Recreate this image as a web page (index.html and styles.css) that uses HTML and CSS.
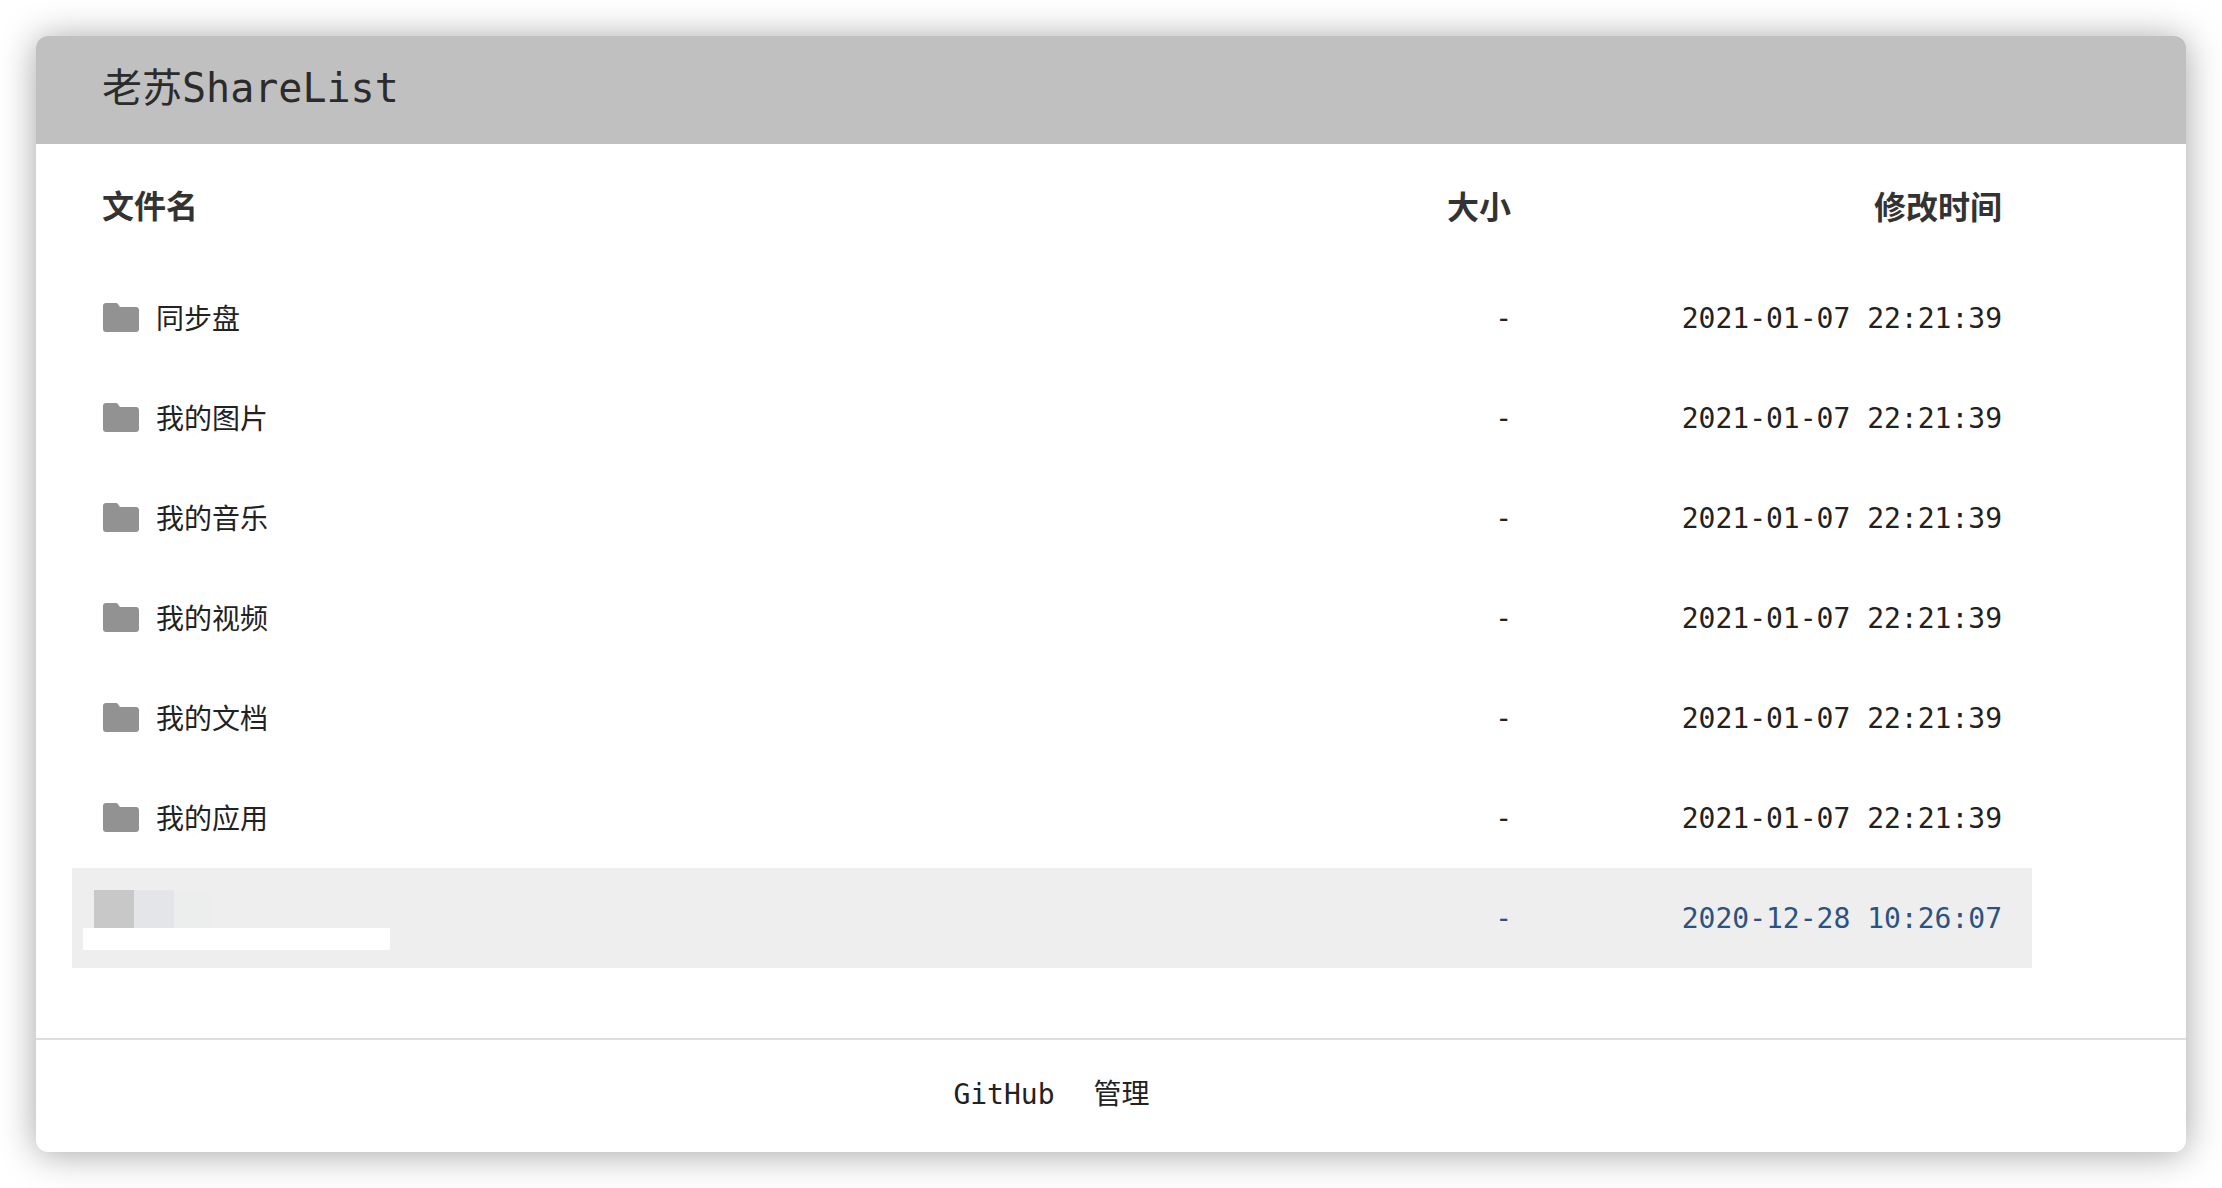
FILE: index.html
```html
<!DOCTYPE html>
<html lang="zh-CN">
<head>
<meta charset="utf-8">
<title>老苏ShareList</title>
<link rel="stylesheet" href="styles.css">
</head>
<body>
<div class="window">
  <header class="topbar">老苏ShareList</header>
  <main class="list">
    <div class="row head"><div class="name">文件名</div><div class="size">大小</div><div class="time">修改时间</div></div>
    <div class="row"><div class="name"><svg class="folder" viewBox="0 0 36 29"><path d="M3 0h9.500c1.200 0 2 .5 2.700 1.400L17 4h16c1.700 0 3 1.300 3 3v19c0 1.700-1.300 3-3 3H3c-1.700 0-3-1.300-3-3V3c0-1.700 1.300-3 3-3z"/></svg>同步盘</div><div class="size dash">-</div><div class="time stamp">2021-01-07 22:21:39</div></div>
    <div class="row"><div class="name"><svg class="folder" viewBox="0 0 36 29"><path d="M3 0h9.500c1.200 0 2 .5 2.700 1.400L17 4h16c1.700 0 3 1.300 3 3v19c0 1.700-1.300 3-3 3H3c-1.700 0-3-1.300-3-3V3c0-1.700 1.300-3 3-3z"/></svg>我的图片</div><div class="size dash">-</div><div class="time stamp">2021-01-07 22:21:39</div></div>
    <div class="row"><div class="name"><svg class="folder" viewBox="0 0 36 29"><path d="M3 0h9.500c1.200 0 2 .5 2.700 1.400L17 4h16c1.700 0 3 1.300 3 3v19c0 1.700-1.300 3-3 3H3c-1.700 0-3-1.300-3-3V3c0-1.700 1.300-3 3-3z"/></svg>我的音乐</div><div class="size dash">-</div><div class="time stamp">2021-01-07 22:21:39</div></div>
    <div class="row"><div class="name"><svg class="folder" viewBox="0 0 36 29"><path d="M3 0h9.500c1.200 0 2 .5 2.700 1.400L17 4h16c1.700 0 3 1.300 3 3v19c0 1.700-1.300 3-3 3H3c-1.700 0-3-1.300-3-3V3c0-1.700 1.300-3 3-3z"/></svg>我的视频</div><div class="size dash">-</div><div class="time stamp">2021-01-07 22:21:39</div></div>
    <div class="row"><div class="name"><svg class="folder" viewBox="0 0 36 29"><path d="M3 0h9.500c1.200 0 2 .5 2.700 1.400L17 4h16c1.700 0 3 1.300 3 3v19c0 1.700-1.300 3-3 3H3c-1.700 0-3-1.300-3-3V3c0-1.700 1.300-3 3-3z"/></svg>我的文档</div><div class="size dash">-</div><div class="time stamp">2021-01-07 22:21:39</div></div>
    <div class="row"><div class="name"><svg class="folder" viewBox="0 0 36 29"><path d="M3 0h9.500c1.200 0 2 .5 2.700 1.400L17 4h16c1.700 0 3 1.300 3 3v19c0 1.700-1.300 3-3 3H3c-1.700 0-3-1.300-3-3V3c0-1.700 1.300-3 3-3z"/></svg>我的应用</div><div class="size dash">-</div><div class="time stamp">2021-01-07 22:21:39</div></div>
    <div class="row active">
      <div class="masked">
        <div class="blocks"><span class="block b1"></span><span class="block b2"></span><span class="block b3"></span></div>
        <div class="bar"></div>
      </div>
      <div class="size dash">-</div><div class="time stamp">2020-12-28 10:26:07</div>
    </div>
  </main>
  <footer class="foot"><a class="link">GitHub</a><a class="link">管理</a></footer>
</div>
</body>
</html>
```

FILE: styles.css
```css
* { box-sizing: border-box; }
html, body { margin: 0; height: 100%; }
body {
  padding: 36px;
  background: #fff;
  font-family: "DejaVu Sans Mono", "Noto Sans Mono CJK SC", "Noto Sans CJK SC", monospace;
  color: #222;
  overflow: hidden;
}
.window {
  width: 2150px;
  height: 1116px;
  display: flex;
  flex-direction: column;
  background: #fff;
  border-radius: 12px;
  box-shadow: 0 2px 36px rgba(0, 0, 0, .36);
  overflow: hidden;
}
.topbar {
  height: 108px;
  flex: none;
  display: flex;
  align-items: center;
  padding: 0 0 10px 66px;
  background: #c0c0c0;
  font-size: 40px;
  color: #2b2b2b;
}
.list {
  flex: 1;
  padding-left: 36px;
  width: 1996px;
}
.row {
  display: grid;
  grid-template-columns: 1fr 302px 492px;
  height: 100px;
  align-items: center;
  font-size: 28px;
}
.head {
  height: 124px;
  padding-bottom: 3px;
  font-size: 32px;
  font-weight: 700;
  color: #333;
}
.name {
  display: flex;
  align-items: center;
  padding: 0 0 2px 30px;
}
.size, .time { text-align: right; padding-right: 30px; }
.size { padding-right: 29px; }
.dash { padding-right: 28px; }
.stamp { padding-top: 1px; }
.folder {
  width: 36px;
  height: 29px;
  margin: 0 17px 0 1px;
  fill: #929292;
  flex: none;
}
.active { background: #eee; color: #2c5282; }
.masked { align-self: start; padding: 22px 0 0 11px; }
.blocks { display: flex; padding-left: 11px; }
.block { width: 40px; height: 38px; }
.b1 { background: #c8c8c8; }
.b2 { background: #e3e5e9; }
.b3 { background: #eceeed; }
.bar { width: 307px; height: 22px; background: #fff; }
.foot {
  height: 114px;
  flex: none;
  display: flex;
  justify-content: center;
  align-items: center;
  gap: 39px;
  border-top: 2px solid #ddd;
  font-size: 28px;
  line-height: 40px;
  color: #222;
  padding: 0 119px 3px 0;
}
.link { display: block; }
```
